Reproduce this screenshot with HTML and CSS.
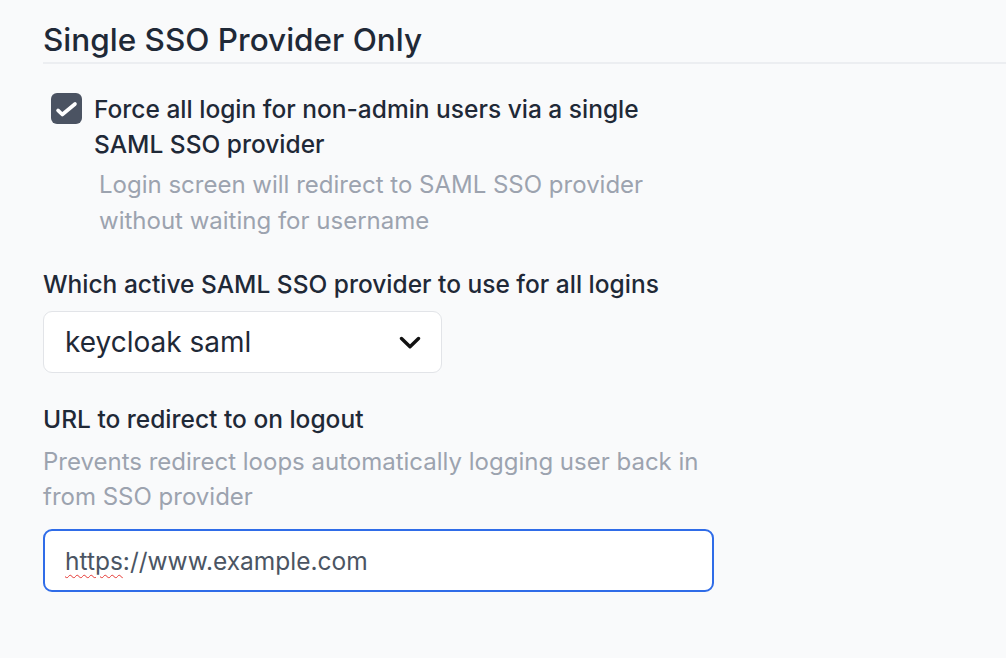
FILE: index.html
```html
<!DOCTYPE html>
<html lang="en">
<head>
<meta charset="utf-8">
<title>Single SSO Provider Only</title>
<link rel="stylesheet" href="styles.css">
</head>
<body>
<main class="page">
  <section class="section">
    <h2 class="section-title">Single SSO Provider Only</h2>

    <div class="check-row">
      <span class="checkbox" aria-checked="true" role="checkbox">
        <svg viewBox="0 0 31 31" width="31" height="31" aria-hidden="true">
          <path d="M7 17.4l4.3 4.1L24 11" fill="none" stroke="#fff" stroke-width="3.6" stroke-linecap="round" stroke-linejoin="round"/>
        </svg>
      </span>
      <div class="check-text">
        <div class="check-label">Force all login for non-admin users via a single SAML SSO provider</div>
        <div class="check-help">Login screen will redirect to SAML SSO provider without waiting for username</div>
      </div>
    </div>

    <div class="field field-select">
      <label class="field-label">Which active SAML SSO provider to use for all logins</label>
      <div class="select">
        <span class="select-value">keycloak saml</span>
        <svg class="select-chevron" viewBox="0 0 22 13" width="22" height="13" aria-hidden="true">
          <path d="M2.5 2.5l8.5 8.2 8.5-8.2" fill="none" stroke="#111" stroke-width="3.4" stroke-linecap="round" stroke-linejoin="round"/>
        </svg>
      </div>
    </div>

    <div class="field field-url">
      <label class="field-label">URL to redirect to on logout</label>
      <div class="field-help">Prevents redirect loops automatically logging user back in from SSO provider</div>
      <div class="input">
        <span class="input-value"><span class="misspelled">https</span>://www.example.com</span>
      </div>
    </div>
  </section>
</main>
</body>
</html>
```

FILE: styles.css
```css
html, body {
  margin: 0;
  padding: 0;
  background: #f9fafb;
}

body {
  font-family: Inter, "Noto Sans", "Liberation Sans", sans-serif;
  color: #1f2937;
  width: 1006px;
  height: 658px;
  overflow: hidden;
}

.page {
  padding: 20px 0 0 43px;
}

.section-title {
  margin: 0;
  font-size: 31.5px;
  font-weight: 500;
  line-height: 40px;
  padding-bottom: 2px;
  border-bottom: 2px solid #eceef1;
  color: #1f2937;
}

.check-row {
  display: flex;
  align-items: flex-start;
  gap: 12px;
  margin-top: 28px;
  margin-left: 8px;
}

.checkbox {
  flex: none;
  width: 31px;
  height: 31px;
  margin-top: 1px;
  border-radius: 6px;
  background: #4b5362;
  display: flex;
  align-items: center;
  justify-content: center;
}

.checkbox svg {
  display: block;
}

.check-label {
  font-size: 24.5px;
  line-height: 35px;
  font-weight: 500;
  color: #1f2937;
  width: 590px;
}

.check-help {
  margin-top: 5px;
  margin-left: 5px;
  font-size: 24px;
  line-height: 36px;
  color: #9ca3af;
  width: 580px;
}

.field {
  display: flex;
  flex-direction: column;
}

.field-select {
  margin-top: 28px;
}

.field-url {
  margin-top: 29px;
}

.field-label {
  font-size: 24.5px;
  line-height: 35px;
  font-weight: 500;
  color: #1f2937;
}

.field-select .field-label {
  margin-bottom: 9px;
}

.field-help {
  margin-top: 7px;
  font-size: 24px;
  line-height: 35px;
  color: #9ca3af;
  width: 680px;
}

.select {
  box-sizing: border-box;
  width: 399px;
  height: 62px;
  background: #fff;
  border: 1.5px solid #e2e4e8;
  border-radius: 9px;
  display: flex;
  align-items: center;
  justify-content: space-between;
  padding: 0 20px 0 21px;
}

.select-value {
  font-size: 28px;
  color: #1f2937;
}

.select-chevron {
  display: block;
}

.input {
  box-sizing: border-box;
  margin-top: 15px;
  width: 671px;
  height: 63px;
  background: #fff;
  border: 2.5px solid #2f6ce8;
  border-radius: 9px;
  display: flex;
  align-items: center;
  padding: 0 20px;
}

.input-value {
  font-size: 24.5px;
  color: #4b5563;
}

.misspelled {
  text-decoration: underline wavy #e53935;
  text-decoration-thickness: 1px;
  text-underline-offset: 4px;
}
```
